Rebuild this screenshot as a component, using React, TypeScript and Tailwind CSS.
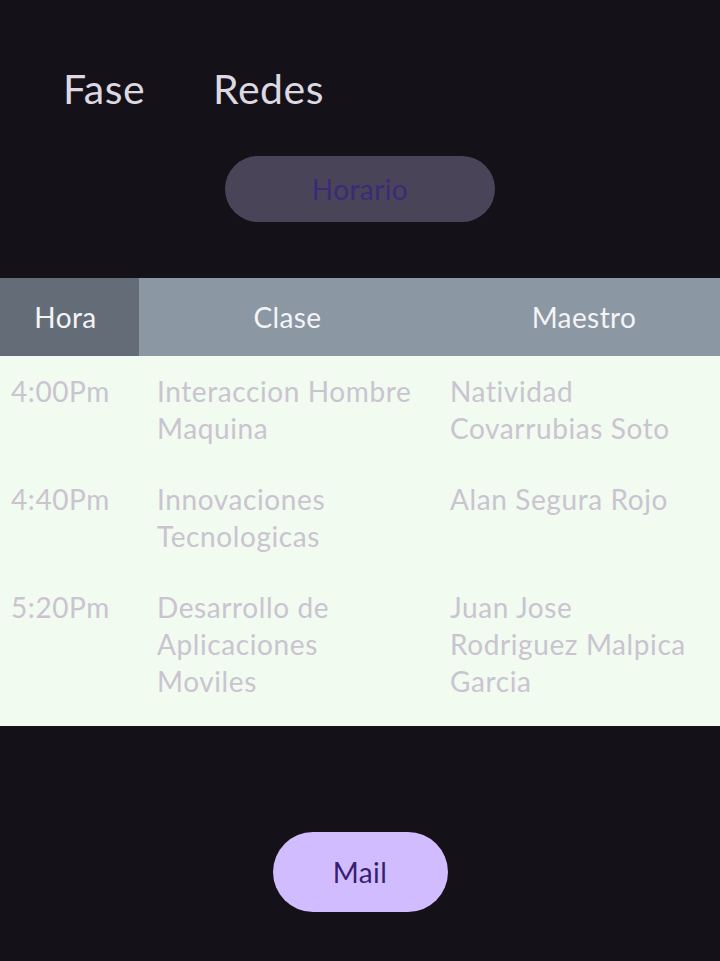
const rows = [
  { hora: '4:00Pm', clase: ['Interaccion Hombre', 'Maquina'], maestro: ['Natividad', 'Covarrubias Soto'] },
  { hora: '4:40Pm', clase: ['Innovaciones', 'Tecnologicas'], maestro: ['Alan Segura Rojo'] },
  { hora: '5:20Pm', clase: ['Desarrollo de', 'Aplicaciones', 'Moviles'], maestro: ['Juan Jose', 'Rodriguez Malpica', 'Garcia'] },
];

export default function App() {
  return (
    <div className="w-[720px] h-[961px] bg-[#141218] flex flex-col font-['Lato',sans-serif]">
      <nav className="flex items-center gap-[68px] pl-[63px] pt-[62px] h-[116px]">
        <span className="text-[41px] leading-[52px] tracking-[0.5px] text-[#ddd8e1]">Fase</span>
        <span className="text-[41px] leading-[52px] tracking-[0.5px] text-[#ddd8e1]">Redes</span>
      </nav>

      <div className="flex justify-center pt-[40px]">
        <button className="w-[270px] h-[66px] rounded-full bg-[#4a4458] text-[#3b2a78] text-[28px] tracking-[0.4px]">
          Horario
        </button>
      </div>

      <div className="mt-[56px]">
        <div className="flex h-[78px] text-[28px] tracking-[0.4px] text-[#f4f4f6]">
          <div className="w-[139px] bg-[#646d77] flex items-center justify-center pr-[8px]">Hora</div>
          <div className="w-[297px] bg-[#8c97a4] flex items-center justify-center">Clase</div>
          <div className="flex-1 bg-[#8c97a4] flex items-center justify-center pl-[12px]">Maestro</div>
        </div>
        <div className="bg-[#f1fbf0] pb-[9px] text-[28px] leading-[37px] tracking-[0.6px] text-[#cac4d0]">
          {rows.map((r) => (
            <div key={r.hora} className="flex py-[17px]">
              <div className="w-[139px] pl-[11px]">{r.hora}</div>
              <div className="w-[297px] pl-[18px]">
                {r.clase.map((l) => <div key={l}>{l}</div>)}
              </div>
              <div className="flex-1 pl-[14px]">
                {r.maestro.map((l) => <div key={l}>{l}</div>)}
              </div>
            </div>
          ))}
        </div>
      </div>

      <div className="flex justify-center pt-[106px]">
        <button className="w-[175px] h-[80px] rounded-full bg-[#d0bcff] text-[#381e72] text-[28px] tracking-[0.4px]">
          Mail
        </button>
      </div>
    </div>
  );
}
